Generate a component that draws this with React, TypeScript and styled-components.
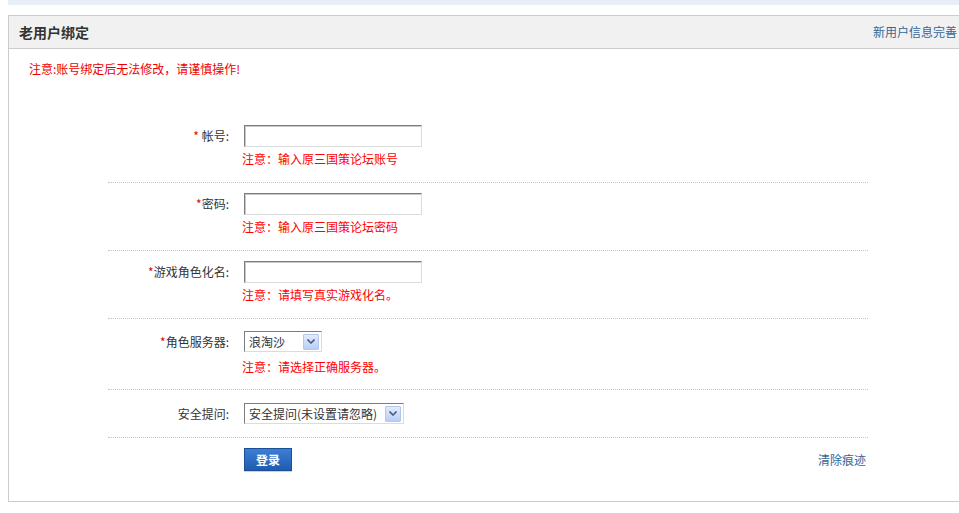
import React from "react";
import styled, { createGlobalStyle } from "styled-components";

const Global = createGlobalStyle`
  html, body { margin: 0; padding: 0; background: #fff; overflow: hidden; }
  body { font-family: "Noto Sans CJK SC", "Noto Sans", sans-serif; font-size: 12px; color: #333; }
`;

const Page = styled.div`
  width: 959px;
  height: 513px;
  overflow: hidden;
  padding-left: 8px;
  box-sizing: border-box;
`;

const TopBand = styled.div`
  height: 5px;
  background: #e8eef6;
  margin-bottom: 10px;
`;

const Panel = styled.div`
  width: 958px;
  border: 1px solid #cccccc;
  box-sizing: border-box;
`;

const Header = styled.div`
  height: 32px;
  background: #f1f1f1;
  border-bottom: 1px solid #cccccc;
  display: flex;
  align-items: center;
  justify-content: space-between;
  padding: 0 8px 0 10px;
`;

const Title = styled.h2`
  margin: 0;
  font-size: 14px;
  font-weight: bold;
  color: #333;
  line-height: 20px;
`;

const HeaderLink = styled.a`
  color: #336699;
  text-decoration: none;
  font-size: 12px;
  line-height: 16px;
`;

const Body = styled.div`
  padding: 12px 0 0 20px;
`;

const Warning = styled.p`
  margin: 0;
  color: #ee0000;
  line-height: 16px;
  font-size: 12px;
`;

const Form = styled.div`
  width: 760px;
  margin: 38px 0 0 79px;
`;

const Row = styled.div<{ $pt: number; $pb: number }>`
  display: grid;
  grid-template-columns: 128px 1fr;
  column-gap: 8px;
  padding: ${(p) => p.$pt}px 0 ${(p) => p.$pb}px;
  border-bottom: 1px dotted #c4c4c4;
`;

const Label = styled.label`
  text-align: right;
  line-height: 22px;
  height: 22px;
  color: #333;
  padding-right: 7px;
`;

const Star = styled.span`
  color: #ee0000;
`;

const Field = styled.div`
  display: flex;
  flex-direction: column;
  align-items: flex-start;
`;

const TextInput = styled.input`
  width: 178px;
  height: 22px;
  box-sizing: border-box;
  border: 1px solid;
  border-color: #7d7d7d #dcdcdc #dcdcdc #7d7d7d;
  box-shadow: inset 1px 1px 0 #c8c8c8;
  padding: 0 3px;
  font: inherit;
  outline: none;
`;

const Note = styled.div<{ $gap: number }>`
  margin-top: ${(p) => p.$gap}px;
  line-height: 18px;
  color: #ff0000;
  margin-left: -2px;
`;

const SelectBox = styled.div<{ $w: number }>`
  width: ${(p) => p.$w}px;
  height: 21px;
  box-sizing: border-box;
  border: 1px solid;
  border-color: #7d7d7d #dcdcdc #dcdcdc #7d7d7d;
  display: flex;
  align-items: center;
  justify-content: space-between;
  padding: 0 2px 0 4px;
  color: #333;
  line-height: 19px;
  white-space: nowrap;
`;

const Arrow = styled.span`
  width: 16px;
  height: 16px;
  box-sizing: border-box;
  border: 1px solid #b4c6ec;
  background: linear-gradient(#e2ebfd, #b9cdf4);
  border-radius: 1px;
  display: flex;
  align-items: center;
  justify-content: center;
  flex-shrink: 0;
`;

const ButtonRow = styled.div`
  display: flex;
  align-items: flex-start;
  justify-content: space-between;
  padding: 10px 2px 30px 136px;
`;

const LoginButton = styled.button`
  width: 48px;
  height: 23px;
  border: 1px solid #1d4f95;
  background: linear-gradient(#3c7fd6, #1f5cae);
  color: #fff;
  font: bold 12px "Noto Sans CJK SC", sans-serif;
  padding: 0;
  box-shadow: 0 1px 0 #c7d3e3;
  cursor: pointer;
`;

const ClearLink = styled.a`
  color: #336699;
  text-decoration: none;
  line-height: 18px;
  margin-top: 3px;
`;

const ArrowIcon = () => (
  <Arrow>
    <svg width="8" height="5" viewBox="0 0 8 5">
      <path d="M0.5 0.5 L4 4 L7.5 0.5" fill="none" stroke="#4b5f88" strokeWidth="1.6" />
    </svg>
  </Arrow>
);

export default function App() {
  return (
    <Page>
      <Global />
      <TopBand />
      <Panel>
        <Header>
          <Title>老用户绑定</Title>
          <HeaderLink href="#">新用户信息完善</HeaderLink>
        </Header>
        <Body>
          <Warning>注意:账号绑定后无法修改，请谨慎操作!</Warning>
          <Form>
            <Row $pt={10} $pb={14}>
              <Label><Star>*</Star> 帐号:</Label>
              <Field>
                <TextInput type="text" />
                <Note $gap={3}>注意：输入原三国策论坛账号</Note>
              </Field>
            </Row>
            <Row $pt={10} $pb={14}>
              <Label><Star>*</Star>密码:</Label>
              <Field>
                <TextInput type="password" />
                <Note $gap={3}>注意：输入原三国策论坛密码</Note>
              </Field>
            </Row>
            <Row $pt={10} $pb={14}>
              <Label><Star>*</Star>游戏角色化名:</Label>
              <Field>
                <TextInput type="text" />
                <Note $gap={3}>注意：请填写真实游戏化名。</Note>
              </Field>
            </Row>
            <Row $pt={12} $pb={13}>
              <Label><Star>*</Star>角色服务器:</Label>
              <Field>
                <SelectBox $w={78}>
                  浪淘沙
                  <ArrowIcon />
                </SelectBox>
                <Note $gap={6}>注意：请选择正确服务器。</Note>
              </Field>
            </Row>
            <Row $pt={13} $pb={12}>
              <Label>安全提问:</Label>
              <Field>
                <SelectBox $w={160}>
                  安全提问(未设置请忽略)
                  <ArrowIcon />
                </SelectBox>
              </Field>
            </Row>
            <ButtonRow>
              <LoginButton>登录</LoginButton>
              <ClearLink href="#">清除痕迹</ClearLink>
            </ButtonRow>
          </Form>
        </Body>
      </Panel>
    </Page>
  );
}
